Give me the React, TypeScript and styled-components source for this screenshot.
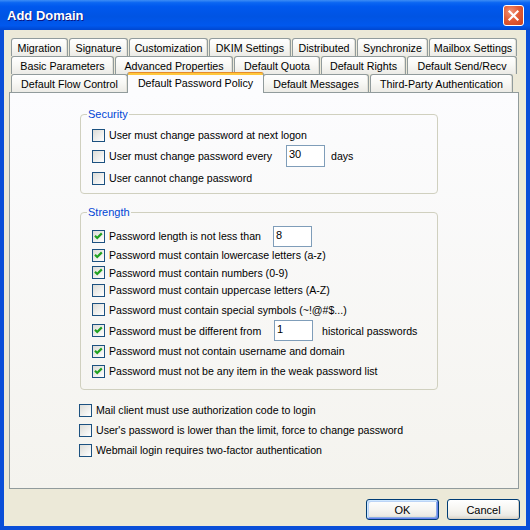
import React from "react";
import styled, { createGlobalStyle, css } from "styled-components";

const GlobalStyle = createGlobalStyle`
  html, body { margin: 0; padding: 0; background: #ECE9D8; }
  body { font-family: "Liberation Sans", Arial, sans-serif; font-size: 10.6px; color: #000; }
  * { box-sizing: border-box; }
`;

const Window = styled.div`
  width: 530px;
  height: 530px;
  display: flex;
  flex-direction: column;
  background: #0A4ED8;
`;

const TitleBar = styled.div`
  height: 30px;
  flex: none;
  display: flex;
  align-items: center;
  justify-content: space-between;
  padding: 0 6px 0 7px;
  background: linear-gradient(
    to bottom,
    #3D8DF5 0%,
    #0B66F2 9%,
    #0058EE 22%,
    #0054E3 55%,
    #0058EE 85%,
    #0047D0 100%
  );
`;

const Title = styled.span`
  font: bold 13px "Liberation Sans", Arial, sans-serif;
  color: #fff;
  text-shadow: 1px 1px 0 #0A1883;
`;

const CloseButton = styled.div`
  width: 21px;
  height: 21px;
  border: 1px solid #fff;
  border-radius: 3px;
  background: radial-gradient(circle at 35% 30%, #F19478 0%, #E35D37 45%, #C9411F 100%);
  display: flex;
  align-items: center;
  justify-content: center;
`;

const Frame = styled.div`
  flex: 1;
  display: flex;
  padding: 0 4px 4px 4px;
`;

const Body = styled.div`
  flex: 1;
  background: #ECE9D8;
  display: flex;
  flex-direction: column;
  padding: 8px 7px 6px 5px;
`;

const TabStrip = styled.div`
  display: flex;
  flex-direction: column;
  padding-left: 2px;
  flex: none;
`;

const TabRow = styled.div`
  display: flex;
  gap: 1px;
  height: 18px;
  align-items: flex-start;
`;

const Tab = styled.div<{ $w: number; $active?: boolean }>`
  flex: none;
  width: ${(p) => p.$w}px;
  height: 18px;
  display: flex;
  align-items: center;
  justify-content: center;
  white-space: nowrap;
  font-size: 10.7px;
  border: 1px solid #919B9C;
  border-bottom: none;
  border-radius: 3px 3px 0 0;
  background: linear-gradient(to bottom, #FFFFFF 0%, #F8F8F5 45%, #ECEBE6 100%);
  box-shadow: inset -1px 0 0 #E3E1D8;
  ${(p) =>
    p.$active &&
    css`
      position: relative;
      z-index: 2;
      height: 21px;
      margin: -2px -2px 0 -2px;
      border-top-color: #E68B2C;
      padding-bottom: 1px;
      box-shadow: none;
      background: linear-gradient(to bottom, #FFC73C 0, #FFC73C 2px, #FCFCFE 2px, #FCFCFE 100%);
    `}
`;

const Panel = styled.div`
  height: 397px;
  flex: none;
  border: 1px solid #919B9C;
  background: linear-gradient(to bottom, #FCFCFE, #F4F3EE);
  padding: 14px 0 0 70px;
  display: flex;
  flex-direction: column;
  align-items: flex-start;
`;

const Group = styled.fieldset<{ $pt: number; $pb: number; $gap?: number }>`
  margin: ${(p) => p.$gap || 0}px 0 0 0;
  width: 358px;
  min-inline-size: 0;
  border: 1px solid #D0D0BF;
  border-radius: 4px;
  padding: ${(p) => p.$pt}px 0 ${(p) => p.$pb}px 0;
`;

const Legend = styled.legend`
  color: #0046D5;
  padding: 0 1px;
  margin-left: 6px;
  line-height: 14px;
  font-size: 11px;
`;

const GroupBody = styled.div`
  display: flex;
  flex-direction: column;
  padding-left: 11px;
`;

const Options = styled.div`
  display: flex;
  flex-direction: column;
  margin: 10px 0 0 -1px;
`;

const Row = styled.div<{ $h: number }>`
  display: flex;
  align-items: center;
  height: ${(p) => p.$h}px;
`;

const Box = styled.span`
  flex: none;
  width: 13px;
  height: 13px;
  border: 1px solid #1C5180;
  background: linear-gradient(135deg, #DCDCD7 0%, #FFFFFF 100%);
  display: flex;
  margin-right: 4px;
`;

const Label = styled.span<{ $w?: number }>`
  white-space: nowrap;
  flex: none;
  ${(p) => p.$w && `width: ${p.$w}px;`}
`;

const Field = styled.div<{ $after: number; $h: number }>`
  flex: none;
  width: 39px;
  height: ${(p) => p.$h}px;
  border: 1px solid #7F9DB9;
  background: #fff;
  padding: 2px 0 0 2px;
  margin-right: ${(p) => p.$after}px;
  line-height: 13px;
  font-size: 11px;
`;

const ButtonRow = styled.div`
  display: flex;
  justify-content: flex-end;
  gap: 8px;
  margin: 10px -1px 0 0;
`;

const Button = styled.div<{ $default?: boolean }>`
  width: 73px;
  height: 21px;
  border: 1px solid #003C74;
  border-radius: 3px;
  display: flex;
  align-items: center;
  justify-content: center;
  font-size: 11px;
  background: linear-gradient(to bottom, #FFFFFF 0%, #F6F5F1 50%, #ECEBE6 80%, #D8D2C6 100%);
  box-shadow: ${(p) =>
    p.$default
      ? "inset 1px 1px 0 #CEE7FF, inset -1px -1px 0 #6982EE, inset 2px 2px 0 #BCD4F6, inset -2px -2px 0 #89ADE4"
      : "inset -1px -1px 0 #D6D0C5"};
`;

const Check = ({ on }: { on?: boolean }) => (
  <Box>
    {on && (
      <svg width="11" height="11" viewBox="0 0 11 11">
        <path d="M2 4.8 L4.2 7 L8.8 2.4" fill="none" stroke="#21A121" strokeWidth="2.2" />
      </svg>
    )}
  </Box>
);

const row1 = [
  ["Migration", 57],
  ["Signature", 59],
  ["Customization", 79],
  ["DKIM Settings", 82],
  ["Distributed", 64],
  ["Synchronize", 71],
  ["Mailbox Settings", 88],
] as const;

const row2 = [
  ["Basic Parameters", 103],
  ["Advanced Properties", 118],
  ["Default Quota", 86],
  ["Default Rights", 85],
  ["Default Send/Recv", 110],
] as const;

const row3 = [
  ["Default Flow Control", 117],
  ["Default Password Policy", 137],
  ["Default Messages", 106],
  ["Third-Party Authentication", 143],
] as const;

type Opt = { text: string; on?: boolean; h: number; w?: number; field?: string; fh?: number; after?: number; tail?: string };

const security: Opt[] = [
  { text: "User must change password at next logon", h: 20 },
  { text: "User must change password every", h: 22, w: 177, field: "30", fh: 22, after: 6, tail: "days" },
  { text: "User cannot change password", h: 22 },
];

const strength: Opt[] = [
  { text: "Password length is not less than", on: true, h: 20, w: 164, field: "8", fh: 21, after: 0 },
  { text: "Password must contain lowercase letters (a-z)", on: true, h: 18 },
  { text: "Password must contain numbers (0-9)", on: true, h: 17 },
  { text: "Password must contain uppercase letters (A-Z)", h: 18 },
  { text: "Password must contain special symbols (~!@#$...)", h: 21 },
  { text: "Password must be different from", on: true, h: 21, w: 165, field: "1", fh: 21, after: 9, tail: "historical passwords" },
  { text: "Password must not contain username and domain", on: true, h: 20 },
  { text: "Password must not be any item in the weak password list", on: true, h: 20 },
];

const extra: Opt[] = [
  { text: "Mail client must use authorization code to login", h: 20 },
  { text: "User's password is lower than the limit, force to change password", h: 20 },
  { text: "Webmail login requires two-factor authentication", h: 20 },
];

const OptionRow = ({ o }: { o: Opt }) => (
  <Row $h={o.h}>
    <Check on={o.on} />
    <Label $w={o.w}>{o.text}</Label>
    {o.field !== undefined && (
      <Field $after={o.after || 0} $h={o.fh || 21}>
        {o.field}
      </Field>
    )}
    {o.tail && <Label>{o.tail}</Label>}
  </Row>
);

export default function App() {
  return (
    <>
      <GlobalStyle />
      <Window>
        <TitleBar>
          <Title>Add Domain</Title>
          <CloseButton>
            <svg width="13" height="13" viewBox="0 0 13 13">
              <path d="M2.5 2.5 L10.5 10.5 M10.5 2.5 L2.5 10.5" stroke="#fff" strokeWidth="2.2" strokeLinecap="square" />
            </svg>
          </CloseButton>
        </TitleBar>
        <Frame>
          <Body>
            <TabStrip>
              <TabRow>
                {row1.map(([t, w]) => (
                  <Tab key={t} $w={w}>{t}</Tab>
                ))}
              </TabRow>
              <TabRow>
                {row2.map(([t, w]) => (
                  <Tab key={t} $w={w}>{t}</Tab>
                ))}
              </TabRow>
              <TabRow>
                {row3.map(([t, w]) => (
                  <Tab key={t} $w={w} $active={t === "Default Password Policy"}>{t}</Tab>
                ))}
              </TabRow>
            </TabStrip>
            <Panel>
              <Group $pt={4} $pb={4}>
                <Legend>Security</Legend>
                <GroupBody>
                  {security.map((o) => (
                    <OptionRow key={o.text} o={o} />
                  ))}
                </GroupBody>
              </Group>
              <Group $pt={7} $pb={8} $gap={11}>
                <Legend>Strength</Legend>
                <GroupBody>
                  {strength.map((o) => (
                    <OptionRow key={o.text} o={o} />
                  ))}
                </GroupBody>
              </Group>
              <Options>
                {extra.map((o) => (
                  <OptionRow key={o.text} o={o} />
                ))}
              </Options>
            </Panel>
            <ButtonRow>
              <Button $default>OK</Button>
              <Button>Cancel</Button>
            </ButtonRow>
          </Body>
        </Frame>
      </Window>
    </>
  );
}
